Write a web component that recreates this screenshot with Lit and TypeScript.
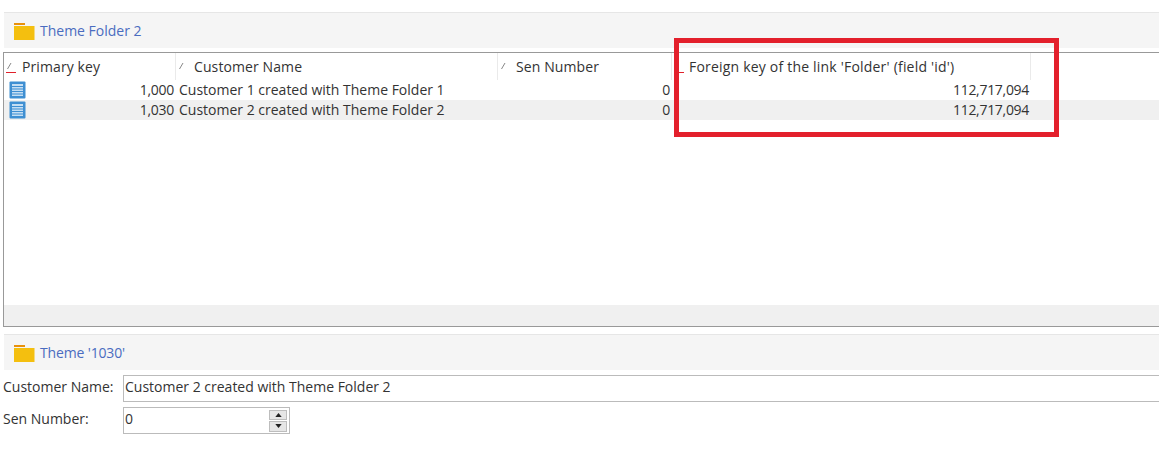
import { LitElement, html, svg, css } from "lit";
import { customElement } from "lit/decorators.js";

const folder = html`<svg class="folder" width="22" height="18" viewBox="0 0 22 18"><rect x="0" y="1" width="11" height="2" fill="#e8910c"/><rect x="0" y="4" width="20.5" height="14" fill="#f4bf0f"/></svg>`;
const doc = html`<svg class="doc" width="17" height="18" viewBox="0 0 17 18"><rect x="0.5" y="0.5" width="16" height="17" rx="1" fill="#3f8fd2"/><rect x="3" y="3" width="11" height="12" fill="#c5def3"/><path d="M3 5.5h11M3 8h11M3 10.5h11M3 13h11" stroke="#3f8fd2" stroke-width="1"/></svg>`;
const sortMark = (red: boolean, slash: boolean) => html`<svg class="mark" width="12" height="15" viewBox="0 0 12 15">${slash ? svg`<path d="M3.5 10 L7 4" stroke="#888" stroke-width="1" fill="none"/>` : ""}${red ? svg`<path d="M2 13.5h10" stroke="#e0202a" stroke-width="1"/>` : ""}</svg>`;

@customElement("app-root")
export class AppRoot extends LitElement {
  static styles = css`
    :host { display: block; position: relative; width: 1159px; height: 464px; background: #fff; overflow: hidden;
      font-family: "Open Sans", "Noto Sans", sans-serif; font-size: 14px; color: #333; }
    .page { display: flex; flex-direction: column; padding-top: 12px; }
    .head { margin-left: 4px; height: 36px; box-sizing: border-box; border-top: 1px solid #e6e6e6; background: #f5f5f5;
      display: flex; align-items: center; gap: 4px; padding-left: 10px; color: #4a6cc0; }
    .head .short { letter-spacing: -0.15px; }
    .grid { margin: 4px 0 7px 3px; height: 275px; box-sizing: border-box; border: 1px solid #999; border-right: none;
      display: flex; flex-direction: column; }
    .cols { display: grid; grid-template-columns: 172px 322px 174px 359px 1fr; }
    .hdr { height: 27px; }
    .hdr > div { display: flex; align-items: center; gap: 6px; box-sizing: border-box; height: 27px;
      border-right: 1px solid #eaeaea; letter-spacing: 0.1px; }
    .hdr > div:last-child { border-right: none; }
    .hdr .long { letter-spacing: 0.2px; margin-left: -1px; }
    .mark { flex: none; }
    .row { height: 20px; line-height: 18px; }
    .row.alt { background: #f0f0f0; }
    .row > div { display: flex; align-items: center; height: 20px; white-space: nowrap; }
    .num { justify-content: flex-end; padding-right: 2px; letter-spacing: -0.3px; }
    .c1 { justify-content: space-between; padding-left: 5px; padding-right: 2px; }
    .c1 span { letter-spacing: -0.3px; }
    .c2 { padding-left: 3px; }
    .spacer { flex: 1; }
    .band { height: 21px; background: #f0f0f0; }
    .form { display: grid; grid-template-columns: 120px 1fr; row-gap: 5px; margin-left: 3px; margin-top: 5px; align-items: center; }
    label { position: relative; top: -2px; }
    .input { box-sizing: border-box; height: 26px; border: 1px solid #bbb; display: flex; align-items: center; padding: 0 0 4px 1px; }
    .input.name { border-right: none; height: 27px; }
    .input.sen { width: 167px; justify-content: space-between; height: 27px; }
    .spin { width: 18px; height: 22px; display: flex; flex-direction: column; gap: 1px; margin: 4px 2px 0 0; }
    .spin span { flex: 1; background: #e6e6e6; border: 1px solid #bdbdbd; box-sizing: border-box; display: flex; align-items: center; justify-content: center; }
    .overlay { position: absolute; left: 674px; top: 38px; width: 385px; height: 99px; box-sizing: border-box; border: 5px solid #e3202c; pointer-events: none; }
  `;
  render() {
    const rows = [["1,000", "Customer 1 created with Theme Folder 1"], ["1,030", "Customer 2 created with Theme Folder 2"]];
    return html`<div class="page">
      <div class="head">${folder}<span>Theme Folder 2</span></div>
      <div class="grid">
        <div class="cols hdr">
          <div>${sortMark(true, true)}<span>Primary key</span></div>
          <div>${sortMark(false, true)}<span>Customer Name</span></div>
          <div>${sortMark(false, true)}<span>Sen Number</span></div>
          <div>${sortMark(true, false)}<span class="long">Foreign key of the link 'Folder' (field 'id')</span></div>
          <div></div>
        </div>
        ${rows.map((r, i) => html`<div class="cols row ${i ? "alt" : ""}">
          <div class="c1">${doc}<span>${r[0]}</span></div>
          <div class="c2">${r[1]}</div>
          <div class="num">0</div>
          <div class="num">112,717,094</div>
          <div></div>
        </div>`)}
        <div class="spacer"></div>
        <div class="band"></div>
      </div>
      <div class="head">${folder}<span class="short">Theme '1030'</span></div>
      <div class="form">
        <label>Customer Name:</label>
        <div class="input name">Customer 2 created with Theme Folder 2</div>
        <label>Sen Number:</label>
        <div class="input sen"><span>0</span><div class="spin">
          <span><svg width="7" height="4" viewBox="0 0 8 5"><path d="M4 0 L8 5 H0Z" fill="#222"/></svg></span>
          <span><svg width="7" height="4" viewBox="0 0 8 5"><path d="M0 0 H8 L4 5Z" fill="#222"/></svg></span>
        </div></div>
      </div>
      <div class="overlay"></div>
    </div>`;
  }
}
